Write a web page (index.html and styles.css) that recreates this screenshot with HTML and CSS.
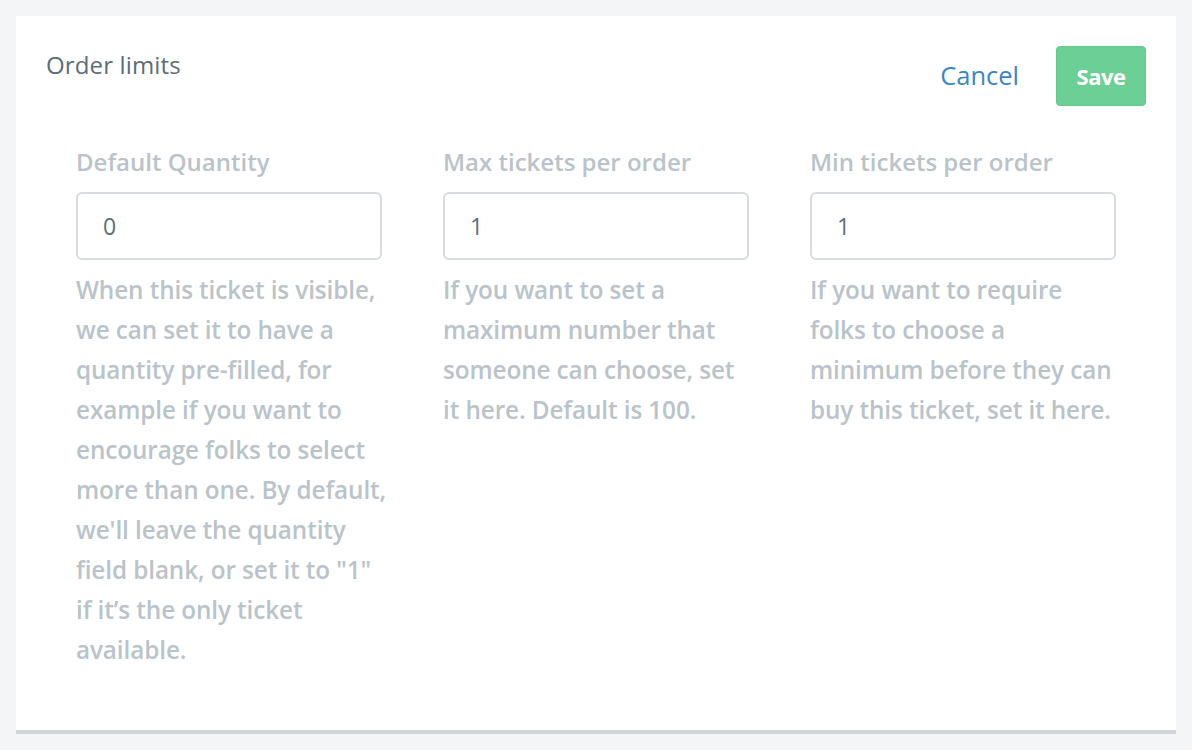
FILE: index.html
```html
<!DOCTYPE html>
<html>
<head>
<meta charset="utf-8">
<link rel="stylesheet" href="styles.css">
</head>
<body>
<div class="card">
  <div class="header">
    <h2 class="title">Order limits</h2>
    <div class="actions">
      <a class="cancel">Cancel</a>
      <button class="save">Save</button>
    </div>
  </div>
  <div class="fields">
    <div class="field">
      <label class="label">Default Quantity</label>
      <div class="input">0</div>
      <p class="help">When this ticket is visible,<br>we can set it to have a<br>quantity pre-filled, for<br>example if you want to<br>encourage folks to select<br>more than one. By default,<br>we'll leave the quantity<br>field blank, or set it to "1"<br>if it’s the only ticket<br>available.</p>
    </div>
    <div class="field">
      <label class="label">Max tickets per order</label>
      <div class="input">1</div>
      <p class="help">If you want to set a<br>maximum number that<br>someone can choose, set<br>it here. Default is 100.</p>
    </div>
    <div class="field">
      <label class="label">Min tickets per order</label>
      <div class="input">1</div>
      <p class="help">If you want to require<br>folks to choose a<br>minimum before they can<br>buy this ticket, set it here.</p>
    </div>
  </div>
</div>
</body>
</html>
```
FILE: styles.css
```css
html, body {
  margin: 0;
  padding: 0;
  background: #f4f5f7;
}
body {
  padding: 16px;
  font-family: "Open Sans", "Liberation Sans", sans-serif;
}
.card {
  background: #fff;
  border-bottom: 4px solid #cfd5da;
  height: 718px;
  box-sizing: border-box;
}
.header {
  display: flex;
  justify-content: space-between;
  align-items: flex-start;
  padding: 30px 30px 0 30px;
}
.title {
  margin: 0;
  font-size: 24px;
  line-height: 37px;
  font-weight: 500;
  color: #5b6d7a;
  letter-spacing: 0.15px;
}
.actions {
  display: flex;
  align-items: center;
  gap: 37px;
}
.cancel {
  font-size: 25.5px;
  line-height: 56px;
  margin-top: -3px;
  color: #3d85c3;
}
.save {
  width: 90px;
  height: 60px;
  background: #6ccf96;
  border: 1px solid #5fc88a;
  border-radius: 4px;
  color: #fff;
  font-family: inherit;
  font-size: 22px;
  font-weight: 700;
  letter-spacing: -0.5px;
  padding: 0;
}
.fields {
  display: flex;
  gap: 61px;
  padding: 36px 60px 0 60px;
}
.field {
  width: 306px;
  flex: none;
}
.label {
  display: block;
  font-size: 24px;
  line-height: 40px;
  font-weight: 600;
  color: #b9c3ca;
  white-space: nowrap;
}
.input {
  margin-top: 10px;
  height: 68px;
  box-sizing: border-box;
  border: 2px solid #d6dce0;
  border-radius: 6px;
  padding: 0 25px;
  display: flex;
  align-items: center;
  font-size: 23px;
  color: #5b6d7a;
}
.help {
  margin: 10px 0 0 0;
  font-size: 24.3px;
  line-height: 40px;
  font-weight: 600;
  color: #b9c3ca;
  letter-spacing: -0.1px;
  white-space: nowrap;
}
```
